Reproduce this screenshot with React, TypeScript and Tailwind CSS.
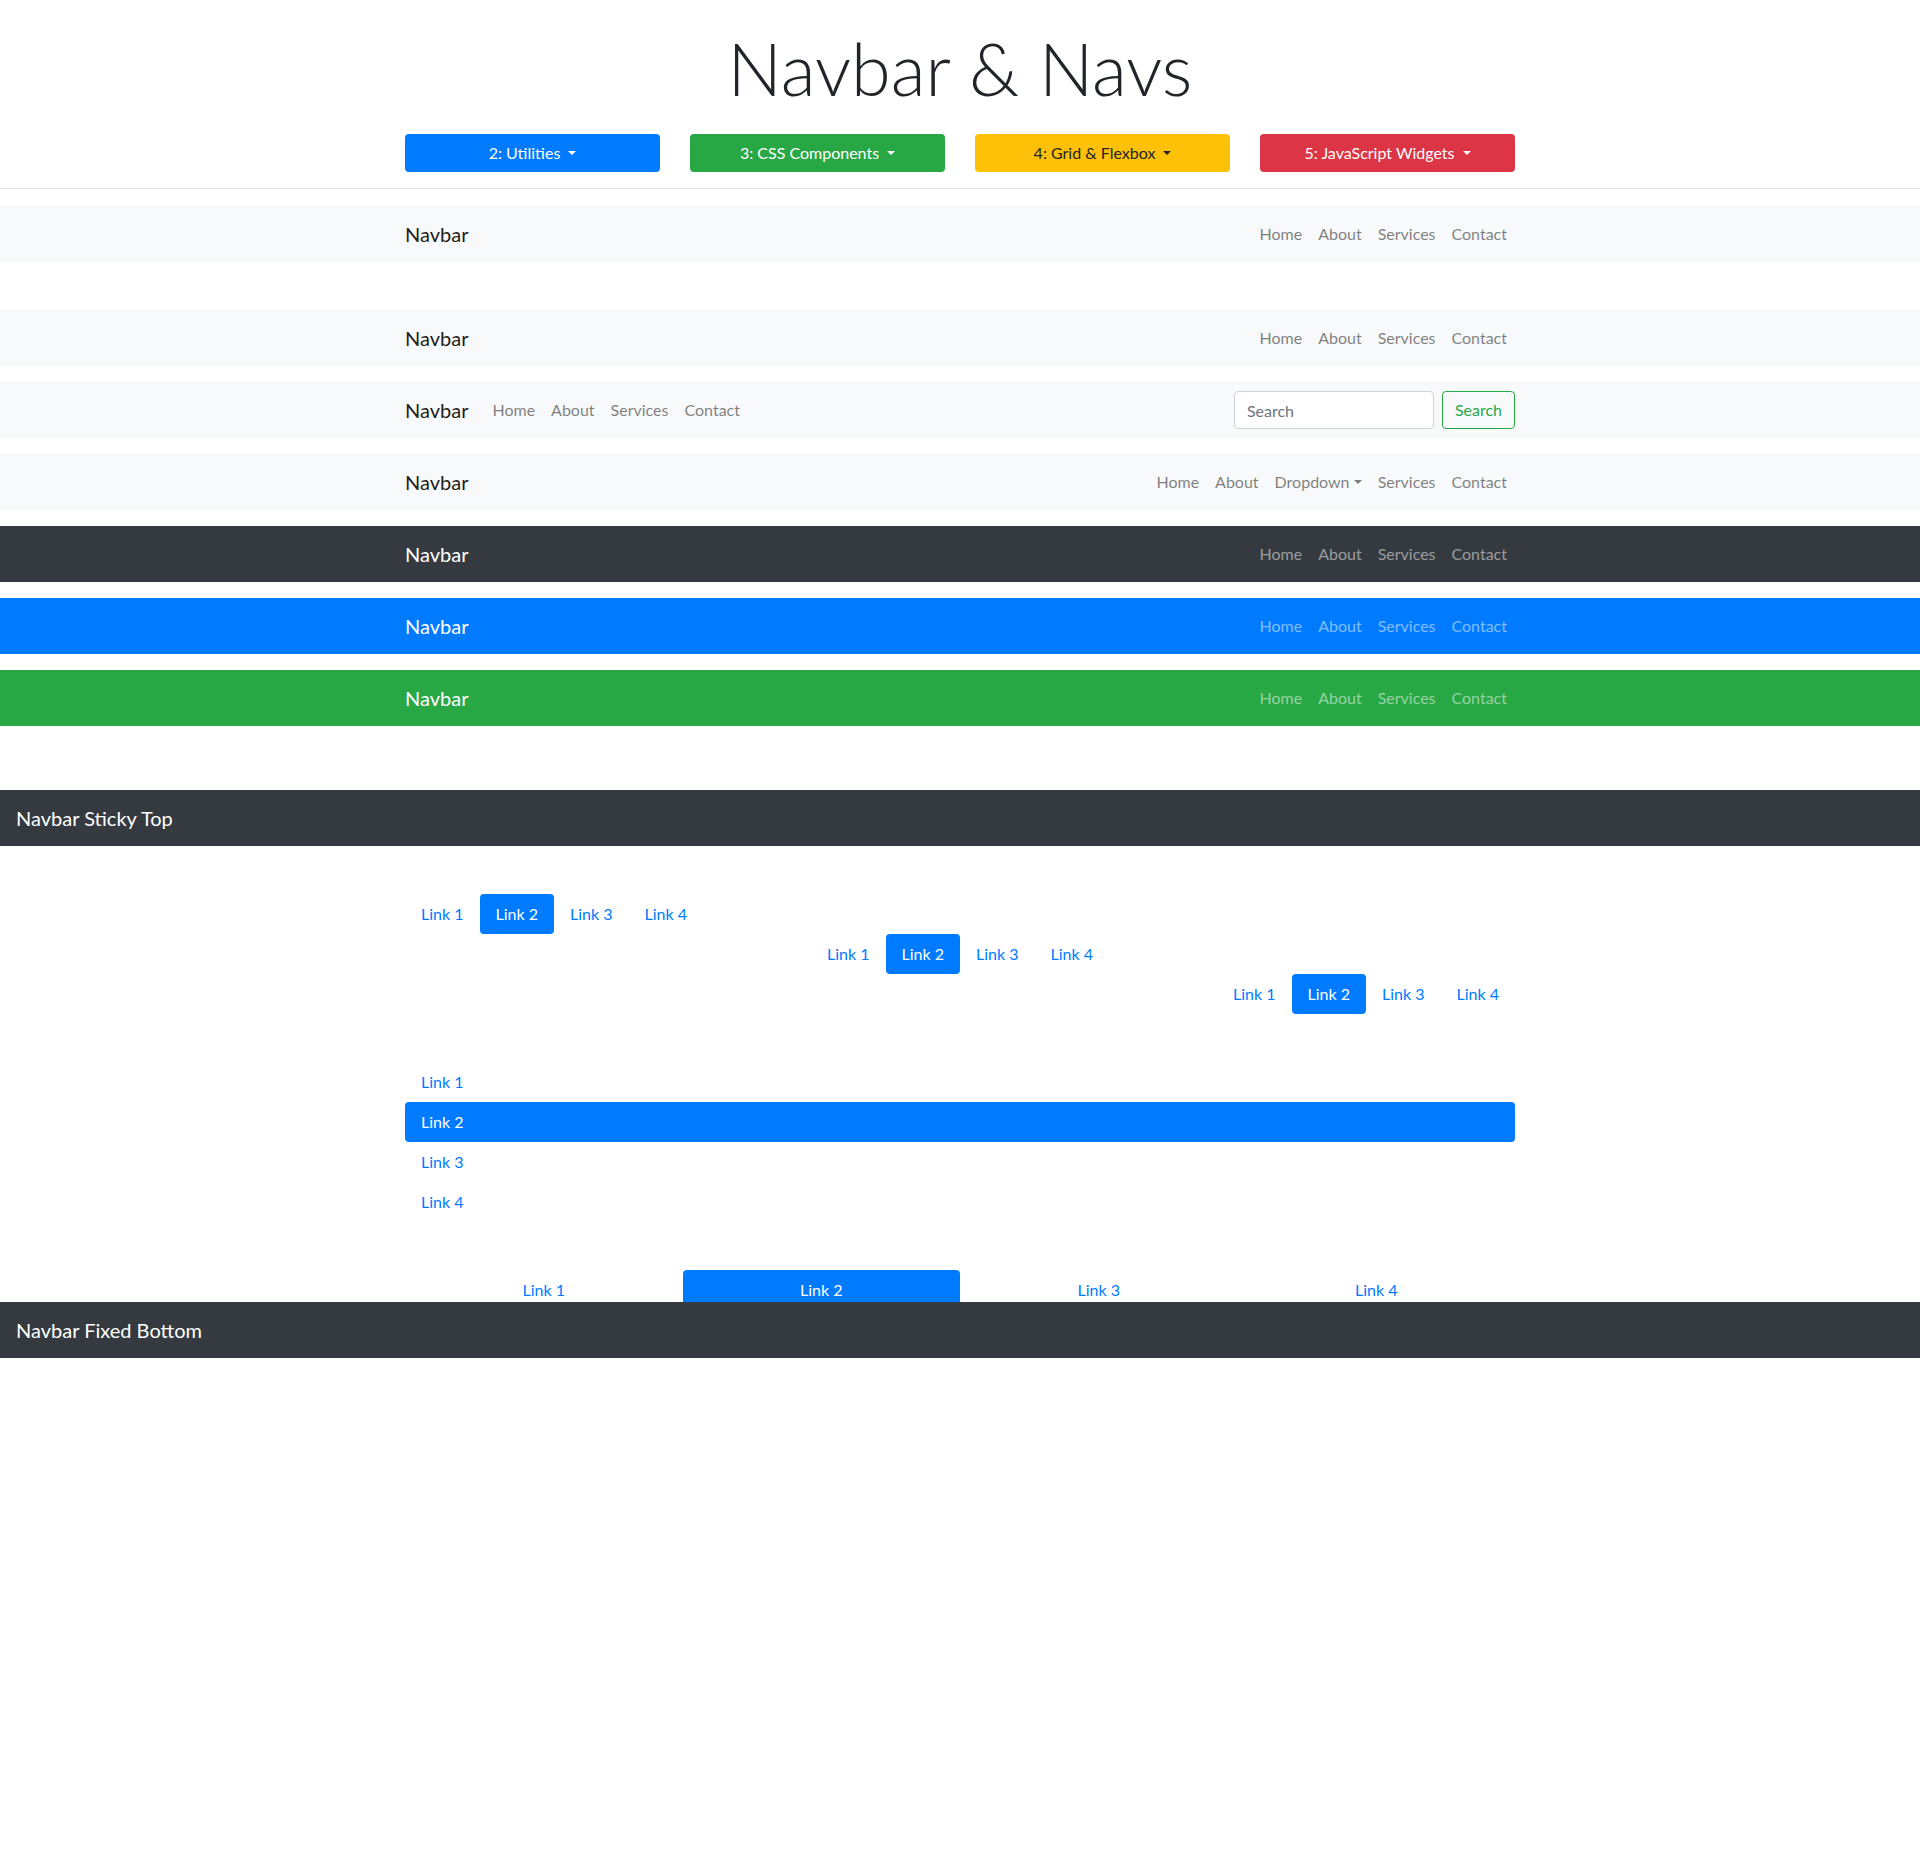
import React from 'react';

const links = ['Home', 'About', 'Services', 'Contact'];

// caret used by the dropdown toggles
const Caret = ({ className = 'ml-[0.255em]' }: { className?: string }) => (
  <span className={`inline-block h-0 w-0 border-x-[0.3em] border-t-[0.3em] border-x-transparent border-t-current align-[0.255em] ${className}`} />
);

type Theme = 'light' | 'dark' | 'primary' | 'success';

const themeBg: Record<Theme, string> = {
  light: 'bg-[#f8f9fa]',
  dark: 'bg-[#343a40]',
  primary: 'bg-[#007bff]',
  success: 'bg-[#28a745]',
};

const Brand = ({ theme }: { theme: Theme }) => (
  <a className={`mr-4 py-[5px] text-[20px] leading-[30px] ${theme === 'light' ? 'text-black/90' : 'text-white'}`}>
    Navbar
  </a>
);

const NavLinks = ({ theme, items }: { theme: Theme; items: string[] }) => (
  <ul className="flex">
    {items.map((l) => (
      <li key={l}>
        <a className={`block px-2 py-2 text-[16px] leading-6 ${theme === 'light' ? 'text-black/50' : 'text-white/50'}`}>
          {l}
          {l === 'Dropdown' && <Caret />}
        </a>
      </li>
    ))}
  </ul>
);

const Navbar = ({ theme, items = links, className = 'mb-4' }: { theme: Theme; items?: string[]; className?: string }) => (
  <nav className={`${themeBg[theme]} py-2 ${className}`}>
    <div className="mx-auto flex w-[1110px] items-center justify-between">
      <Brand theme={theme} />
      <NavLinks theme={theme} items={items} />
    </div>
  </nav>
);

const Pills = ({ justify }: { justify: string }) => (
  <ul className={`flex ${justify}`}>
    {['Link 1', 'Link 2', 'Link 3', 'Link 4'].map((l) => (
      <li key={l}>
        <a className={`block rounded px-4 py-2 text-[16px] leading-6 ${l === 'Link 2' ? 'bg-[#007bff] text-white' : 'text-[#007bff]'}`}>
          {l}
        </a>
      </li>
    ))}
  </ul>
);

export default function App() {
  const buttons = [
    { label: '2: Utilities', cls: 'bg-[#007bff] text-white' },
    { label: '3: CSS Components', cls: 'bg-[#28a745] text-white' },
    { label: '4: Grid & Flexbox', cls: 'bg-[#ffc107] text-[#212529]' },
    { label: '5: JavaScript Widgets', cls: 'bg-[#dc3545] text-white' },
  ];

  return (
    <div className="min-h-[1857px] bg-white font-['Lato','Noto_Sans',sans-serif] text-[#212529]">
      {/* header */}
      <header className="border-b border-[#dee2e6] pb-[16px] pt-[25px]">
        <div className="mx-auto w-[1110px]">
          <h1 className="mb-[23px] text-center text-[72px] font-light leading-[1.2]">Navbar &amp; Navs</h1>
          <div className="grid grid-cols-4 gap-[30px]">
            {buttons.map((b) => (
              <button key={b.label} className={`h-[38px] rounded text-[16px] leading-6 ${b.cls}`}>
                {b.label}
                <Caret className="ml-2" />
              </button>
            ))}
          </div>
        </div>
      </header>

      <div className="mt-[17px]">
        <Navbar theme="light" className="mb-[48px]" />
        <Navbar theme="light" />

        {/* navbar with search form */}
        <nav className="mb-4 bg-[#f8f9fa] py-2">
          <div className="mx-auto flex w-[1110px] items-center">
            <Brand theme="light" />
            <NavLinks theme="light" items={links} />
            <form className="ml-auto flex items-center">
              <input
                placeholder="Search"
                className="mr-2 h-[38px] w-[200px] rounded border border-[#ced4da] bg-white px-3 text-[16px] text-[#495057] placeholder:text-[#6c757d]"
              />
              <button type="button" className="h-[38px] rounded border border-[#28a745] px-3 text-[16px] text-[#28a745]">
                Search
              </button>
            </form>
          </div>
        </nav>

        <Navbar theme="light" items={['Home', 'About', 'Dropdown', 'Services', 'Contact']} />
        <Navbar theme="dark" />
        <Navbar theme="primary" />
        <Navbar theme="success" className="mb-[64px]" />
      </div>

      {/* sticky top */}
      <nav className="flex h-[56px] items-center bg-[#343a40] px-4">
        <span className="text-[20px] leading-[30px] text-white">Navbar Sticky Top</span>
      </nav>

      <div className="mx-auto mt-[48px] w-[1110px]">
        <Pills justify="justify-start" />
        <Pills justify="justify-center" />
        <Pills justify="justify-end" />

        <ul className="mt-[48px] flex flex-col">
          {['Link 1', 'Link 2', 'Link 3', 'Link 4'].map((l) => (
            <li key={l}>
              <a className={`block rounded px-4 py-2 text-[16px] leading-6 ${l === 'Link 2' ? 'bg-[#007bff] text-white' : 'text-[#007bff]'}`}>
                {l}
              </a>
            </li>
          ))}
        </ul>

        <ul className="mt-[48px] grid grid-cols-4 text-center">
          {['Link 1', 'Link 2', 'Link 3', 'Link 4'].map((l) => (
            <li key={l}>
              <a className={`block rounded px-4 py-2 text-[16px] leading-6 ${l === 'Link 2' ? 'bg-[#007bff] text-white' : 'text-[#007bff]'}`}>
                {l}
              </a>
            </li>
          ))}
        </ul>
      </div>

      {/* fixed bottom bar, overlaps the last nav */}
      <nav className="relative z-10 -mt-[8px] flex h-[56px] items-center bg-[#343a40] px-4">
        <span className="text-[20px] leading-[30px] text-white">Navbar Fixed Bottom</span>
      </nav>
    </div>
  );
}
